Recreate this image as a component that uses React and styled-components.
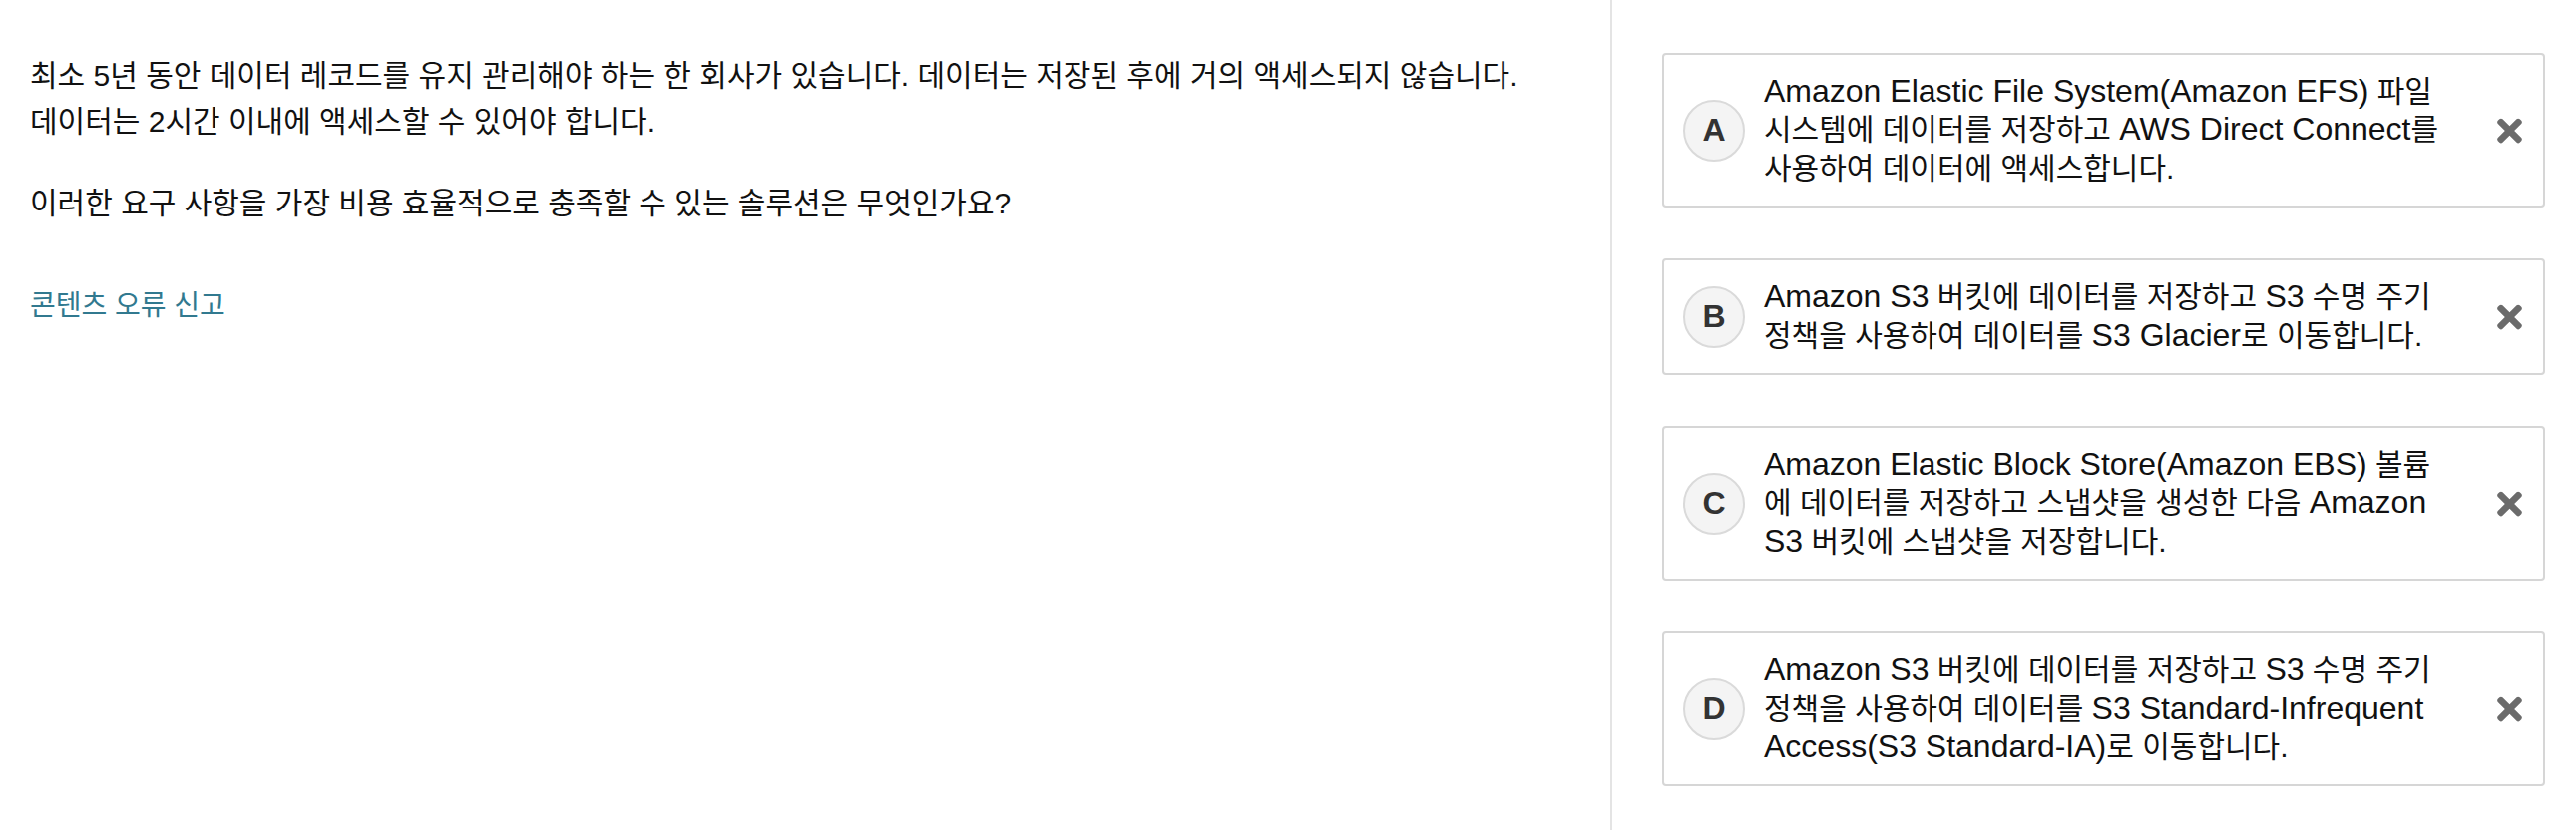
import React from "react";
import styled, { createGlobalStyle } from "styled-components";
import { FaTimes } from "react-icons/fa";

const GlobalStyle = createGlobalStyle`
  html, body {
    margin: 0;
    padding: 0;
    background: #ffffff;
  }
  body {
    font-family: "Liberation Sans", "Noto Sans CJK KR", sans-serif;
    color: #111111;
  }
`;

const Page = styled.main`
  display: grid;
  grid-template-columns: 1614px 1fr;
  min-height: 832px;
`;

const QuestionPane = styled.section`
  padding: 53px 30px 0 30px;
  font-size: 30px;
  line-height: 46px;
`;

const Paragraph = styled.p`
  margin: 0 0 ${(p) => p.$gap}px;
`;

const En = styled.span`
  font-size: 32px;
  line-height: 1;
`;

const ReportLink = styled.a`
  display: inline-block;
  color: #31798f;
  font-size: 28px;
  line-height: 46px;
  text-decoration: none;
  cursor: pointer;
`;

const AnswerPane = styled.section`
  border-left: 2px solid #e4e4e4;
  padding: 53px 31px 0 50px;
  display: flex;
  flex-direction: column;
  gap: 51px;
`;

const Choice = styled.div`
  display: flex;
  align-items: center;
  border: 2px solid #d6d6d6;
  border-radius: 4px;
  padding: 18px 21px 18px 19px;
  background: #ffffff;
`;

const Badge = styled.span`
  flex: none;
  box-sizing: border-box;
  width: 62px;
  height: 62px;
  border-radius: 50%;
  border: 2px solid #dadada;
  background: #f4f4f4;
  display: flex;
  align-items: center;
  justify-content: center;
  font-size: 32px;
  font-weight: 700;
  color: #333333;
`;

const ChoiceText = styled.div`
  flex: 1;
  margin-left: 19px;
  font-size: 30px;
  line-height: 38.4px;
  white-space: nowrap;
`;

const CloseIcon = styled(FaTimes)`
  flex: none;
  width: 25px;
  height: 36px;
  color: #6b6b6b;
`;

const choices = [
  {
    key: "A",
    lines: [
      [<En key="e">Amazon Elastic File System(Amazon EFS)</En>, " 파일"],
      ["시스템에 데이터를 저장하고 ", <En key="e">AWS Direct Connect</En>, "를"],
      ["사용하여 데이터에 액세스합니다."],
    ],
  },
  {
    key: "B",
    lines: [
      [<En key="e">Amazon S3</En>, " 버킷에 데이터를 저장하고 ", <En key="f">S3</En>, " 수명 주기"],
      ["정책을 사용하여 데이터를 ", <En key="e">S3 Glacier</En>, "로 이동합니다."],
    ],
  },
  {
    key: "C",
    lines: [
      [<En key="e">Amazon Elastic Block Store(Amazon EBS)</En>, " 볼륨"],
      ["에 데이터를 저장하고 스냅샷을 생성한 다음 ", <En key="e">Amazon</En>],
      [<En key="e">S3</En>, " 버킷에 스냅샷을 저장합니다."],
    ],
  },
  {
    key: "D",
    lines: [
      [<En key="e">Amazon S3</En>, " 버킷에 데이터를 저장하고 ", <En key="f">S3</En>, " 수명 주기"],
      ["정책을 사용하여 데이터를 ", <En key="e">S3 Standard-Infrequent</En>],
      [<En key="e">Access(S3 Standard-IA)</En>, "로 이동합니다."],
    ],
  },
];

export default function App() {
  return (
    <>
      <GlobalStyle />
      <Page>
        <QuestionPane>
          <Paragraph $gap={36}>
            최소 5년 동안 데이터 레코드를 유지 관리해야 하는 한 회사가 있습니다. 데이터는 저장된 후에 거의 액세스되지 않습니다.
            <br />
            데이터는 2시간 이내에 액세스할 수 있어야 합니다.
          </Paragraph>
          <Paragraph $gap={56}>
            이러한 요구 사항을 가장 비용 효율적으로 충족할 수 있는 솔루션은 무엇인가요?
          </Paragraph>
          <ReportLink>콘텐츠 오류 신고</ReportLink>
        </QuestionPane>
        <AnswerPane>
          {choices.map((c) => (
            <Choice key={c.key}>
              <Badge>{c.key}</Badge>
              <ChoiceText>
                {c.lines.map((line, i) => (
                  <React.Fragment key={i}>
                    {line}
                    {i < c.lines.length - 1 && <br />}
                  </React.Fragment>
                ))}
              </ChoiceText>
              <CloseIcon />
            </Choice>
          ))}
        </AnswerPane>
      </Page>
    </>
  );
}
